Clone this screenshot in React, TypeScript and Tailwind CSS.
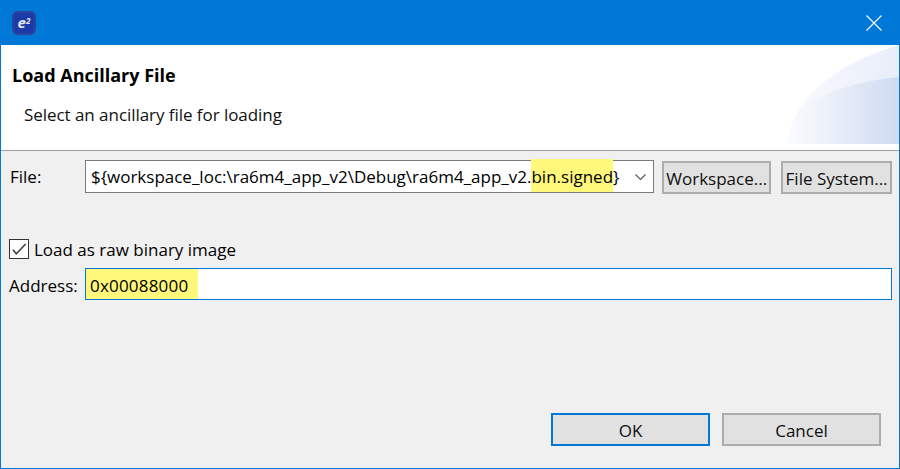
const FONT = "font-['Open_Sans','Noto_Sans',sans-serif]";

function HeaderArt() {
  return (
    <svg className="absolute right-0 top-0 h-[99px] w-[112px]" viewBox="0 0 112 99">
      <defs>
        <linearGradient id="outer" x1="0" x2="1" y1="0" y2="0">
          <stop offset="0" stopColor="#fafbfe" />
          <stop offset="1" stopColor="#e8edf9" />
        </linearGradient>
        <linearGradient id="inner" x1="0" x2="1" y1="0" y2="0">
          <stop offset="0" stopColor="#fafbfe" />
          <stop offset="1" stopColor="#cfdbf1" />
        </linearGradient>
      </defs>
      <path d="M0 99C3 82 8 70 13 63C30 38 60 16 112 0V99Z" fill="url(#outer)" />
      <path d="M13 63C35 48 70 36 112 32V99H4C5 85 9 70 13 63Z" fill="url(#inner)" />
    </svg>
  );
}

function Button({ label, className }: { label: string; className: string }) {
  return (
    <button
      type="button"
      className={`flex items-center justify-center bg-[#e1e1e1] pt-[2px] text-[17px] leading-none text-[#101010] ${className}`}
    >
      {label}
    </button>
  );
}

export default function App() {
  return (
    <div className={`flex h-[469px] w-[900px] flex-col overflow-hidden border-x border-b border-[#0078d7] bg-[#f0f0f0] text-black ${FONT}`}>
      <div className="flex h-[45px] shrink-0 items-center justify-between bg-[#0078d7] pl-[11px] pr-[17px]">
        <div className="flex h-[24px] w-[24px] items-center justify-center rounded-[6px] border-2 border-[#2b429c] bg-[#1d3ba8]">
          <span className="text-[15px] font-bold italic leading-none text-[#e4e8f6]">
            e<sup className="text-[8px]">2</sup>
          </span>
        </div>
        <svg width="16" height="16" viewBox="0 0 16 16" stroke="white" strokeWidth="1.1">
          <path d="M0.5 0.5L15.5 15.5M15.5 0.5L0.5 15.5" />
        </svg>
      </div>

      <div className="relative h-[106px] shrink-0 border-b border-[#a0a0a0] bg-white">
        <HeaderArt />
        <div className="relative pl-[11px] pt-[18px] text-[18px] font-bold leading-[24px]">Load Ancillary File</div>
        <div className="relative pl-[23px] pt-[16px] text-[17px] leading-[24px] tracking-[-0.05px] text-[#111]">
          Select an ancillary file for loading
        </div>
      </div>

      <div className="flex items-start pl-[9px] pr-[7px] pt-[9px] text-[17px]">
        <span className="w-[75px] leading-[33px]">File:</span>
        <div className="flex h-[33px] w-[570px] items-center justify-between border border-[#7a7a7a] bg-white pl-[5px] pr-[7px]">
          <span className="whitespace-nowrap leading-[31px]">
            {"${workspace_loc:\\ra6m4_app_v2\\Debug\\ra6m4_app_v2."}
            <span className="bg-[#fff87a] pb-[4px] pt-[6px]">bin.signed</span>
            {"}"}
          </span>
          <svg width="11" height="6" viewBox="0 0 11 6" fill="none" stroke="#555" strokeWidth="1.1">
            <path d="M0.5 0.5L5.5 5.5L10.5 0.5" />
          </svg>
        </div>
        <Button label="Workspace..." className="ml-[8px] mt-px h-[33px] w-[109px] border-2 border-[#adadad]" />
        <Button label="File System..." className="ml-[10px] mt-px h-[33px] w-[111px] border-2 border-[#adadad]" />
      </div>

      <div className="flex items-center pl-[8px] pt-[45px] text-[17px]">
        <div className="flex h-[20px] w-[20px] items-center justify-center border border-[#333] bg-white">
          <svg width="18" height="18" viewBox="0 0 18 18" fill="none" stroke="#444" strokeWidth="1.6">
            <path d="M3 9.7L6.3 13.7L15.7 4" />
          </svg>
        </div>
        <span className="pl-[5px] pt-[2px] leading-[18px]">Load as raw binary image</span>
      </div>

      <div className="flex items-center pl-[8px] pr-[7px] pt-[9px] text-[17px]">
        <span className="w-[76px] pt-[3px]">Address:</span>
        <div className="flex h-[32px] flex-1 items-center border border-[#0078d7] bg-white">
          <span className="flex h-[30px] w-[112px] items-center bg-[#fff87a] pl-[4px] pt-[3px] tracking-[0.2px]">0x00088000</span>
        </div>
      </div>

      <div className="mt-auto flex justify-end gap-[12px] pb-[22px] pr-[18px]">
        <Button label="OK" className="h-[33px] w-[159px] border-2 border-[#0078d7]" />
        <Button label="Cancel" className="h-[33px] w-[159px] border-2 border-[#adadad]" />
      </div>
    </div>
  );
}
